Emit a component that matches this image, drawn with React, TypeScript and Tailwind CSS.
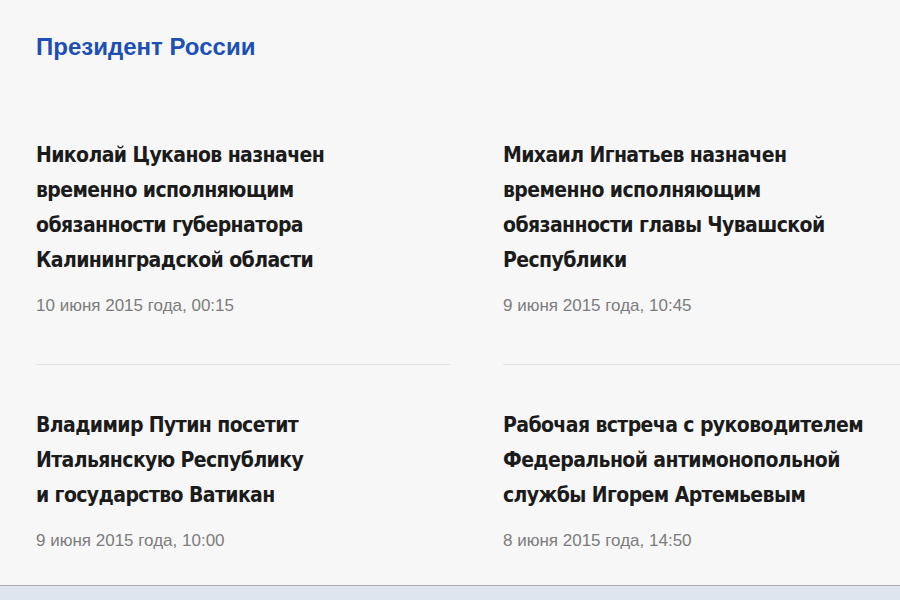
const news = [
  {
    title: ["Николай Цуканов назначен", "временно исполняющим", "обязанности губернатора", "Калининградской области"],
    date: "10 июня 2015 года, 00:15",
  },
  {
    title: ["Михаил Игнатьев назначен", "временно исполняющим", "обязанности главы Чувашской", "Республики"],
    date: "9 июня 2015 года, 10:45",
  },
  {
    title: ["Владимир Путин посетит", "Итальянскую Республику", "и государство Ватикан"],
    date: "9 июня 2015 года, 10:00",
  },
  {
    title: ["Рабочая встреча с руководителем", "Федеральной антимонопольной", "службы Игорем Артемьевым"],
    date: "8 июня 2015 года, 14:50",
  },
];

function NewsItem({ title, date }: { title: string[]; date: string }) {
  return (
    <div className="flex flex-col">
      <div className="font-['DejaVu_Sans_Condensed',sans-serif] text-[21px] font-bold leading-[35px] tracking-[-0.6px] text-[#1b1b1b]">
        {title.map((line) => (
          <div key={line} className="whitespace-nowrap">
            {line}
          </div>
        ))}
      </div>
      <div className="mt-[18px] font-['Liberation_Sans',sans-serif] text-[17px] leading-[20px] text-[#7c7c7c]">
        {date}
      </div>
    </div>
  );
}

export default function App() {
  return (
    <div className="flex h-[600px] w-[900px] flex-col overflow-hidden bg-[#f7f7f7]">
      <div className="flex-1 pl-[36px] pt-[33px]">
        <div className="font-['Liberation_Sans',sans-serif] text-[24px] font-bold leading-[28px] text-[#1d4fb5]">
          Президент России
        </div>
        <div className="mt-[77px] grid w-[881px] grid-cols-[414px_414px] gap-x-[53px]">
          <div className="border-b border-[#e2e2e2] pb-[48px]">
            <NewsItem {...news[0]} />
          </div>
          <div className="border-b border-[#e2e2e2] pb-[48px]">
            <NewsItem {...news[1]} />
          </div>
          <div className="pt-[43px]">
            <NewsItem {...news[2]} />
          </div>
          <div className="pt-[43px]">
            <NewsItem {...news[3]} />
          </div>
        </div>
      </div>
      <div className="h-[15px] shrink-0 border-t border-[#a9acb0] bg-[#dfe5ef]" />
    </div>
  );
}
